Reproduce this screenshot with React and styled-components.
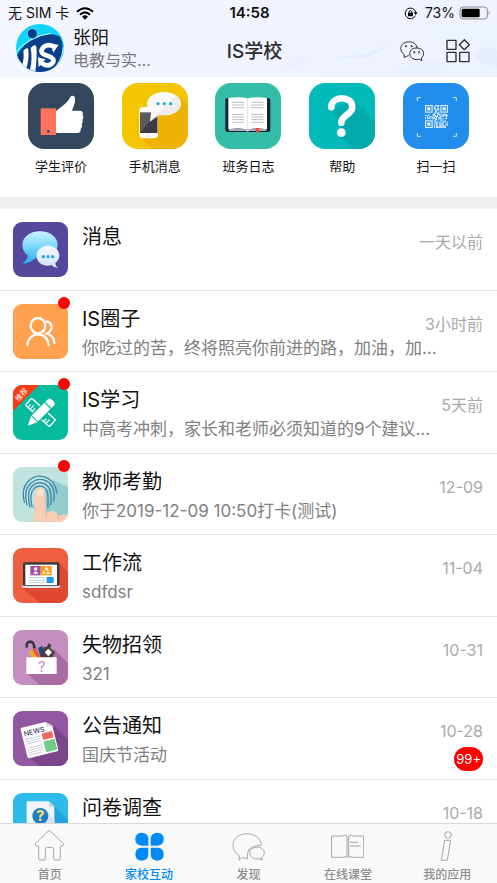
import styled, { createGlobalStyle } from "styled-components"

const GlobalStyle = createGlobalStyle`
* {
  box-sizing: border-box;
}
body {
  margin: 0;
  background-color: #fff;
  font-family: Inter, "Noto Sans CJK SC", sans-serif;
  color: #111;
}
button {
  border: none;
  padding: 0;
  background: none;
  font: inherit;
  color: inherit;
  cursor: pointer;
}
a {
  color: inherit;
  text-decoration: none;
}
svg {
  display: block;
}
`;

const Container = styled.div`
height: 100vh;
display: flex;
flex-direction: column;
overflow: hidden;
`;

const Header = styled.header`
position: relative;
flex: none;
background: linear-gradient(100deg, #f3f5ff, #eff4ff 45%, #edf3ff);
`;

const HeaderArt = styled.svg`
position: absolute;
right: 0;
top: 0;
height: 100%;
`;

const StatusBar = styled.div`
position: relative;
display: grid;
grid-template-columns: 1fr auto 1fr;
align-items: center;
height: 24px;
padding: 2px 6px 0 8px;
font-size: 14px;
line-height: 22px;
`;

const StatusSide = styled.div`
display: flex;
align-items: center;
gap: ${(props) => props.$gap}px;
justify-content: ${(props) => (props.$end ? "flex-end" : "flex-start")};
`;

const Clock = styled.span`
font-size: 15px;
font-weight: 600;
`;

const TitleBar = styled.div`
position: relative;
display: grid;
grid-template-columns: 1fr auto 1fr;
align-items: center;
height: 53px;
padding: 0 0 5px 12px;
`;

const User = styled.div`
display: flex;
align-items: center;
gap: 9px;
padding-left: 4px;
`;

const UserName = styled.div`
font-size: 18px;
line-height: 24px;
`;

const UserDept = styled.div`
font-size: 16px;
line-height: 20px;
color: #777;
white-space: nowrap;
`;

const PageTitle = styled.h1`
margin: 0;
padding-top: 7px;
font-size: 19px;
font-weight: 500;
line-height: 28px;
color: #2b2b2f;
`;

const Actions = styled.div`
display: flex;
justify-content: flex-end;
gap: 22px;
padding: 5px 27px 0 0;
`;

const Shortcuts = styled.nav`
flex: none;
display: grid;
grid-template-columns: repeat(5, 1fr);
padding: 6px 14px 21px;
`;

const Shortcut = styled.button`
display: flex;
flex-direction: column;
align-items: center;
gap: 7px;
font-size: 13px;
line-height: 20px;
`;

const ShortcutIcon = styled.svg`
width: 66px;
height: 66px;
border-radius: 16px;
background-color: ${(props) => props.$bg};
`;

const Divider = styled.div`
flex: none;
height: 12px;
background-color: #f0f0f0;
`;

const List = styled.main`
flex: 1;
min-height: 0;
overflow: hidden;
`;

const Row = styled.a`
display: flex;
gap: 14px;
height: 81px;
padding: 13px 14px 0 13px;
border-bottom: 1px solid #e2e2e2;
&:nth-child(odd) {
  height: 82px;
}
`;

const IconBox = styled.div`
position: relative;
flex: none;
width: 55px;
height: 55px;
`;

const RowIcon = styled.svg`
width: 55px;
height: 55px;
border-radius: 9px;
background-color: ${(props) => props.$bg};
`;

const Dot = styled.span`
position: absolute;
top: -7px;
right: -2px;
width: 12px;
height: 12px;
border-radius: 50%;
background-color: #fe0000;
`;

const RowText = styled.div`
flex: 1;
min-width: 0;
white-space: nowrap;
`;

const RowTitle = styled.div`
font-size: 20px;
line-height: 30px;
`;

const RowDesc = styled.div`
font-size: 17px;
line-height: 28px;
color: #808080;
`;

const RowSide = styled.div`
display: flex;
flex-direction: column;
align-items: flex-end;
gap: 6px;
width: 0;
padding-top: 10px;
white-space: nowrap;
`;

const Time = styled.span`
font-size: 16px;
line-height: 20px;
color: #a9a9a9;
`;

const Count = styled.span`
padding: 0 2px;
border-radius: 12px;
background-color: #fe0000;
font-size: 13px;
line-height: 24px;
color: #fff;
`;

const TabBar = styled.nav`
flex: none;
display: grid;
grid-template-columns: repeat(5, 1fr);
height: 60px;
padding-top: 4px;
border-top: 1px solid #d9d9d9;
background-color: #f9f9f9;
`;

const Tab = styled.a`
display: flex;
flex-direction: column;
align-items: center;
gap: 6px;
font-size: 12px;
font-weight: 500;
line-height: 16px;
color: ${(props) => (props.$active ? "#0089f7" : "#8e8e8e")};
`;

const TabIcon = styled.svg`
width: 33px;
height: 33px;
fill: none;
stroke: #a6a6a6;
stroke-width: 3;
stroke-linejoin: round;
stroke-linecap: round;
`;

const Wifi = () => (
  <svg width="18" height="13" viewBox="0 0 54 39" fill="none" stroke="#000" strokeWidth="6">
    <path d="M3 14 Q27 -7 51 14" />
    <path d="M12 23 Q27 9 42 23" />
    <path d="M18 29 Q27 21 36 29 L27 38 Z" fill="#000" stroke="none" />
  </svg>
)

const RotationLock = () => (
  <svg width="14" height="13" viewBox="0 0 42 39" fill="none" stroke="#000" strokeWidth="3">
    <path d="M34 26 A16 16 0 1 1 35 15" />
    <path d="M29 16 H41 L35 24 Z" fill="#000" stroke="none" />
    <rect x="12" y="17" width="15" height="11" rx="1" fill="#000" stroke="none" />
    <path d="M15 18 V14 Q19 8 24 14 V18" />
  </svg>
)

const Battery = () => (
  <svg width="32" height="14" viewBox="0 0 96 42">
    <rect x="3" y="3" width="82" height="36" rx="9" fill="none" stroke="#8b8b91" strokeWidth="3" />
    <rect x="8" y="8" width="54" height="26" rx="4" fill="#000" />
    <path d="M89 14 Q95 21 89 28 Z" fill="#8b8b91" />
  </svg>
)

const Avatar = () => (
  <svg width="48" height="48" viewBox="0 0 144 144">
    <defs>
      <clipPath id="avatar">
        <circle cx="72" cy="72" r="72" />
      </clipPath>
    </defs>
    <g clipPath="url(#avatar)">
      <rect width="144" height="144" fill="#10d5f8" />
      <path d="M2 96 Q22 56 62 42 Q100 22 132 38 Q144 60 138 92 Q130 124 105 144 H22 Q6 124 2 96 Z" fill="#0a3f8c" />
      <path d="M0 84 Q38 38 104 28" fill="none" stroke="#d9f6fc" strokeWidth="3" />
      <path d="M142 70 Q138 116 104 142" fill="none" stroke="#d9f6fc" strokeWidth="3" />
      <circle cx="49" cy="29" r="15" fill="#0a3f8c" stroke="#8deafa" strokeWidth="2" />
      <path d="M44 72 Q56 58 61 68 Q64 100 58 142 L42 138 Q50 104 44 72 Z" fill="#fff" />
      <path d="M22 80 Q34 68 37 76 Q40 112 29 138 L16 128 Q26 108 22 80 Z" fill="#fff" />
      <path
        d="M118 70 Q100 58 84 68 Q68 84 86 92 L104 99 Q120 110 106 120 Q92 130 76 116"
        fill="none"
        stroke="#fff"
        strokeWidth="14"
      />
      <path d="M112 86 L128 62 L104 60 Z" fill="#fff" />
      <path d="M66 100 L88 106 L68 130 Z" fill="#fff" />
    </g>
  </svg>
)

const ChatIcon = () => (
  <svg width="24" height="24" viewBox="0 0 72 72" fill="none" stroke="#2f2f33" strokeWidth="3" strokeLinejoin="round">
    <path d="M26 50 Q18 51 13 56 L12 46 Q2 39 2 29 C3 2 50 2 51 27" />
    <path d="M59 60 C45 66 29 57 29 43 C31 21 70 22 71 43 Q71 51 65 56 L65 66 Z" />
    <g fill="#2f2f33" stroke="none">
      <circle cx="18" cy="22" r="3" />
      <circle cx="35" cy="22" r="3" />
      <circle cx="43" cy="40" r="3" />
      <circle cx="57" cy="40" r="3" />
    </g>
  </svg>
)

const GridIcon = () => (
  <svg width="24" height="24" viewBox="0 0 72 72" fill="none" stroke="#2f2f33" strokeWidth="4" strokeLinejoin="round">
    <rect x="3" y="4" width="27" height="27" rx="1" />
    <rect x="3" y="40" width="27" height="28" rx="1" />
    <rect x="41" y="40" width="28" height="28" rx="1" />
    <path d="M55 2 L70 17 L55 32 L40 17 Z" />
  </svg>
)

// 21 x 21 modules with the three finder squares left free
const qrCells = []
let seed = 7
for (let y = 0; y < 21; y++) {
  for (let x = 0; x < 21; x++) {
    seed = (seed * 1103515 + 12345) % 65537
    const finder = (x < 8 && y < 8) || (x > 12 && y < 8) || (x < 8 && y > 12)
    if (!finder && seed % 100 < 56) {
      qrCells.push([x, y])
    }
  }
}

const shortcuts = [
  {
    label: "学生评价",
    bg: "#33485d",
    art: (
      <>
        <rect x="38" y="76" width="46" height="80" fill="#ff725b" />
        <circle cx="61" cy="145" r="4" fill="#33485d" />
        <path
          d="M84 84 L108 65 Q122 54 127 42 Q133 35 140 42 Q144 54 136 72 L132 83 H158 Q167 86 164 97 Q169 104 163 110 Q167 118 161 124 Q165 131 158 137 Q160 149 148 150 H84 Z"
          fill="#fff"
        />
      </>
    ),
  },
  {
    label: "手机消息",
    bg: "#f3c502",
    art: (
      <>
        <path d="M172 40 L198 66 V198 H92 L56 164 Z" fill="#edb205" />
        <rect x="52" y="72" width="56" height="94" rx="12" fill="#fff" />
        <rect x="54" y="88" width="52" height="62" fill="#5a5b5f" />
        <path d="M106 88 V150 H54 Z" fill="#3b3c40" />
        <circle cx="80" cy="158" r="5" fill="none" stroke="#ddd" strokeWidth="2" />
        <path d="M75 79 H88" stroke="#ddd" strokeWidth="2" />
        <ellipse cx="126" cy="62" rx="51" ry="35" fill="#f9f9f9" />
        <path d="M88 84 L84 116 L112 90 Z" fill="#f9f9f9" />
        <path d="M162 37 Q184 56 170 80 Q150 100 112 96 L84 116 Z" fill="#ececec" />
        <g fill="#26b4c4">
          <circle cx="108" cy="62" r="5" />
          <circle cx="127" cy="62" r="5" />
          <circle cx="146" cy="62" r="5" />
        </g>
      </>
    ),
  },
  {
    label: "班务日志",
    bg: "#34bda6",
    art: (
      <>
        <rect x="31" y="45" width="135" height="102" rx="7" fill="#14233c" />
        <path d="M40 45 Q72 40 98 46 Q126 40 156 45 V139 Q126 134 98 140 Q72 134 40 139 Z" fill="#fff" />
        <path d="M42 141 H94 L98 144 L103 141 H154" fill="none" stroke="#d7dade" strokeWidth="4" />
        <path d="M98 47 V139" stroke="#d3d3d3" strokeWidth="2" />
        <path
          d="M51 58 H87 M51 66 H87 M51 74 H87 M51 94 H87 M51 102 H87 M51 110 H87 M51 118 H87 M109 58 H146 M109 66 H146 M109 74 H146 M109 94 H146 M109 102 H146 M109 110 H146 M109 118 H146"
          stroke="#bcbcbc"
          strokeWidth="3"
        />
        <path d="M122 135 H133 V150 L128 147 L122 150 Z" fill="#e8472f" />
      </>
    ),
  },
  {
    label: "帮助",
    bg: "#02baba",
    art: (
      <>
        <path d="M132 52 L198 118 V198 H130 L88 156 L98 130 L68 82 Z" fill="#02abab" />
        <path
          d="M67 73 C67 37 130 37 130 72 C130 96 97 94 97 119"
          fill="none"
          stroke="#fff"
          strokeWidth="20"
          strokeLinecap="round"
        />
        <circle cx="97" cy="149" r="13" fill="#fff" />
      </>
    ),
  },
  {
    label: "扫一扫",
    bg: "#218eee",
    art: (
      <>
        <path
          d="M43 54 V44 H53 M150 44 H160 V54 M160 150 V160 H150 M53 160 H43 V150"
          fill="none"
          stroke="#d5eaff"
          strokeWidth="3"
        />
        <svg x="66" y="66" width="69" height="69" viewBox="0 0 21 21">
          {qrCells.map(([x, y]) => (
            <rect key={`${x}-${y}`} x={x} y={y} width="1" height="1" fill="#e6f3ff" />
          ))}
          {[[0, 0], [14, 0], [0, 14]].map(([x, y]) => (
            <g key={`${x}-${y}`}>
              <rect x={x + 0.5} y={y + 0.5} width="6" height="6" fill="none" stroke="#e6f3ff" />
              <rect x={x + 2} y={y + 2} width="3" height="3" fill="#e6f3ff" />
            </g>
          ))}
        </svg>
      </>
    ),
  },
]

const rows = [
  {
    title: "消息",
    time: "一天以前",
    bg: "#55479b",
    art: (
      <>
        <defs>
          <linearGradient id="bubble" x1="0" y1="0" x2="0" y2="1">
            <stop offset="0" stopColor="#c9f4ff" />
            <stop offset="0.45" stopColor="#7fd9fb" />
            <stop offset="1" stopColor="#27a9f2" />
          </linearGradient>
          <linearGradient id="bubbleSmall" x1="0" y1="0" x2="0" y2="1">
            <stop offset="0" stopColor="#f4fbff" />
            <stop offset="1" stopColor="#cfe2f6" />
          </linearGradient>
        </defs>
        <path
          d="M81 28 C112 28 134 46 134 68 C134 92 110 108 80 108 Q70 108 62 112 Q48 126 29 124 Q42 114 45 101 Q28 88 28 68 C28 46 50 28 81 28 Z"
          fill="url(#bubble)"
        />
        <path
          d="M105 71 C125 71 139 84 139 101 Q139 113 127 122 Q127 132 135 137 Q123 138 115 129 Q110 131 103 131 C84 130 71 118 71 101 C71 84 86 71 105 71 Z"
          fill="url(#bubbleSmall)"
        />
        <g fill="#2aa5dc">
          <circle cx="91" cy="104" r="5" />
          <circle cx="105" cy="104" r="5" />
          <circle cx="119" cy="104" r="5" />
        </g>
      </>
    ),
  },
  {
    title: "IS圈子",
    desc: "你吃过的苦，终将照亮你前进的路，加油，加…",
    time: "3小时前",
    dot: true,
    bg: "#ffa14f",
    art: (
      <g fill="none" stroke="#fff" strokeWidth="7">
        <ellipse cx="75" cy="65" rx="22" ry="23" />
        <path d="M43 127 C43 79 107 79 107 127" />
        <path d="M98 52 Q115 53 116 69 Q115 82 102 89 Q122 94 125 119" />
      </g>
    ),
  },
  {
    title: "IS学习",
    desc: "中高考冲刺，家长和老师必须知道的9个建议…",
    time: "5天前",
    dot: true,
    bg: "#07bb9d",
    art: (
      <>
        <path d="M0 0 H78 L0 78 Z" fill="#fb3a12" />
        <text x="25" y="36" fontSize="22" fill="#fff" textAnchor="middle" transform="rotate(-45 26 28)">
          推荐
        </text>
        <g transform="rotate(42 82 82)">
          <rect x="34" y="68" width="97" height="28" rx="4" fill="none" stroke="#fff" strokeWidth="4" />
          <path d="M44 94 V84 M53 94 V80 M62 94 V84 M108 94 V84 M117 94 V80" stroke="#fff" strokeWidth="4" />
        </g>
        <g transform="rotate(-45 82 84)">
          <rect x="46" y="67" width="92" height="34" fill="#07bb9d" />
          <path d="M28 84 L56 71 V97 Z M59 71 H112 V97 H59 Z M116 71 H128 Q135 72 135 84 Q135 96 128 97 H116 Z" fill="#fff" />
        </g>
      </>
    ),
  },
  {
    title: "教师考勤",
    desc: "你于2019-12-09 10:50打卡(测试)",
    time: "12-09",
    dot: true,
    bg: "#c0e4dd",
    art: (
      <>
        <path d="M122 40 L165 60 V165 H90 L58 120 Z" fill="#92cdcc" />
        <g fill="none" stroke="#3f88b2" strokeWidth="4" strokeLinecap="round">
          <path d="M34 106 Q24 66 44 45 Q64 22 92 29 Q126 38 132 78" />
          <path d="M42 114 Q31 72 49 54 Q66 34 90 38 Q118 46 123 74 Q124 88 122 102" />
          <path d="M51 120 Q40 76 55 60 Q68 44 88 48 Q112 54 114 84 Q115 104 112 114" />
          <path d="M57 118 Q49 80 61 67 Q72 54 88 58 Q104 64 105 90 V122" />
        </g>
        <path d="M62 165 L67 82 Q68 62 82 62 Q95 63 96 80 L99 140 Q112 127 130 136 L136 148 Q152 138 165 146 V165 Z" fill="#f9cdb3" />
        <path d="M71 84 Q70 66 82 66 Q93 67 92 84 Q82 92 71 84 Z" fill="#fde0cf" />
        <path d="M99 140 V154 M136 148 L135 158" stroke="#f0b394" strokeWidth="3" />
      </>
    ),
  },
  {
    title: "工作流",
    desc: "sdfdsr",
    time: "11-04",
    bg: "#ef5e3f",
    art: (
      <>
        <path d="M138 44 L165 72 V165 H80 L28 120 Z" fill="#df4830" />
        <rect x="30" y="43" width="109" height="72" rx="6" fill="#38383c" />
        <rect x="37" y="50" width="95" height="61" fill="#fff" />
        <path d="M25 113 H143 Q142 120 134 120 H34 Q26 120 25 113 Z" fill="#e3e3e3" />
        <rect x="52" y="54" width="31" height="28" fill="#a550a5" />
        <rect x="84" y="54" width="32" height="28" fill="#f99c10" />
        <circle cx="68" cy="63" r="5" fill="#fff" />
        <path d="M60 77 Q68 64 76 77 Z" fill="#fff" />
        <path d="M100 59 L109 75 H91 Z" fill="none" stroke="#fff" strokeWidth="4" strokeDasharray="12 4" />
        <path d="M47 89 H94 M47 97 H94 M47 104 H94" stroke="#b5cfd3" strokeWidth="3" />
        <rect x="101" y="87" width="21" height="18" fill="#2196f3" />
      </>
    ),
  },
  {
    title: "失物招领",
    desc: "321",
    time: "10-31",
    bg: "#c48fc0",
    art: (
      <>
        <path d="M124 58 L165 100 V165 H80 L42 130 Z" fill="#aa6ba4" />
        <path d="M42 53 Q38 36 52 35 Q62 35 64 52 L68 62" fill="none" stroke="#38383c" strokeWidth="8" />
        <path d="M47 66 L66 55 L84 84 H58 Z" fill="#f4a829" />
        <path d="M58 60 L68 54 L86 84 H74 Z" fill="#e65a43" />
        <path d="M75 54 L88 47 L98 80 L84 84 Z" fill="#174f86" />
        <path d="M92 52 L102 50 L106 39 L115 45 L112 54 L126 66 L116 84 H84 Z" fill="#45403f" />
        <path d="M106 56 L117 67 L106 79 L95 67 Z" fill="#fff" />
        <rect x="40" y="82" width="91" height="50" rx="2" fill="#fff" />
        <text x="86" y="125" fontSize="44" fill="#c48fc0" textAnchor="middle">?</text>
      </>
    ),
  },
  {
    title: "公告通知",
    desc: "国庆节活动",
    time: "10-28",
    count: "99+",
    bg: "#9357a2",
    art: (
      <>
        <path d="M124 46 L165 86 V165 H80 L46 138 Z" fill="#7c468c" />
        <g transform="rotate(-14 82 86)">
          <path d="M36 38 H110 L127 54 V128 Q127 132 123 132 H36 Q32 132 32 128 V42 Q32 38 36 38 Z" fill="#fff" />
          <path d="M110 38 L127 54 H110 Z" fill="#dcd7e0" />
          <text x="38" y="65" fontSize="21" fontWeight="500" fill="#3f3a66">NEWS</text>
          <path
            d="M38 75 H84 M38 82 H84 M38 89 H84 M38 102 H84 M38 109 H84 M38 116 H84 M38 123 H76"
            stroke="#b9b9be"
            strokeWidth="2"
          />
          <rect x="90" y="69" width="32" height="20" fill="#ef6b5f" />
          <rect x="90" y="94" width="34" height="33" fill="#6fcb83" />
        </g>
      </>
    ),
  },
  {
    title: "问卷调查",
    time: "10-18",
    bg: "#2fbbea",
    art: (
      <>
        <path d="M124 40 L165 80 V165 H40 Z" fill="#22a5df" />
        <path d="M44 25 H108 L124 41 V150 H41 V28 Q41 25 44 25 Z" fill="#f1f5f8" />
        <path d="M98 52 L124 80 V150 H62 Z" fill="#d9e4f0" />
        <path d="M108 25 L124 41 H108 Z" fill="#c5d6e4" />
        <circle cx="82" cy="69" r="24" fill="#1d80c2" />
        <text x="82" y="84" fontSize="42" fontWeight="800" fill="#fddc6a" textAnchor="middle">?</text>
      </>
    ),
  },
]

const tabs = [
  {
    label: "首页",
    art: (
      <path d="M46 9 Q49 6 52 9 L92 48 Q94 53 88 54 H82 V92 Q82 96 78 96 H66 Q62 96 62 92 V64 Q61 58 55 58 H43 Q37 58 37 64 V92 Q37 96 33 96 H21 Q17 96 17 92 V54 H10 Q4 53 7 48 Z" />
    ),
  },
  {
    label: "家校互动",
    active: true,
    art: (
      <g fill="#0089f7" stroke="none">
        <path d="M26 14 Q46 15 46 34 V53 H26 Q7 52 7 34 Q7 15 26 14 Z" />
        <path d="M73 14 Q53 15 53 34 V53 H73 Q92 52 92 34 Q92 15 73 14 Z" />
        <path d="M26 98 Q46 97 46 78 V59 H26 Q7 60 7 78 Q7 97 26 98 Z" />
        <path d="M73 98 Q53 97 53 78 V59 H73 Q92 60 92 78 Q92 97 73 98 Z" />
      </g>
    ),
  },
  {
    label: "发现",
    art: (
      <>
        <path d="M46 91 Q34 91 30 88 L21 97 L22 83 Q3 72 3 52 C4 6 84 6 88 51 Q64 52 51 64 Q44 74 46 91 Z" />
        <path d="M88 90 L91 96 L80 92 C66 96 53 86 53 74 C55 52 96 52 97 74 Q97 84 88 90 Z" />
      </>
    ),
  },
  {
    label: "在线课堂",
    art: (
      <>
        <path d="M3 24 H34 Q42 18 48 24 V88 Q42 84 34 88 H3 Z" />
        <path d="M97 24 H67 Q59 18 53 24 V88 Q59 84 67 88 H97 Z" />
        <path d="M58 43 H80 M58 54 H88" />
      </>
    ),
  },
  {
    label: "我的应用",
    art: (
      <>
        <circle cx="51" cy="21" r="10" />
        <path d="M42 37 H59 L49 97 H32 Z" />
      </>
    ),
  },
]

const App = () => {
  return (
    <Container>
      <GlobalStyle />
      <Header>
        <HeaderArt viewBox="0 0 250 77" aria-hidden="true">
          <path d="M88 57 Q120 56 142 44 Q126 60 108 57 Q98 60 88 57 Z" fill="#e6edfb" />
          <path d="M30 74 L56 54 L68 62 L50 66 Z M148 70 L190 58 L196 77 H146 Z" fill="#eaf0fd" />
          <path d="M226 56 Q240 42 250 50 V68 Q238 66 226 56 Z" fill="#e6edfc" />
        </HeaderArt>
        <StatusBar>
          <StatusSide $gap={7}>
            无 SIM 卡
            <Wifi />
          </StatusSide>
          <Clock>14:58</Clock>
          <StatusSide $gap={7} $end>
            <RotationLock />
            <StatusSide $gap={4}>
              <span>73%</span>
              <Battery />
            </StatusSide>
          </StatusSide>
        </StatusBar>
        <TitleBar>
          <User>
            <Avatar />
            <div>
              <UserName>张阳</UserName>
              <UserDept>电教与实…</UserDept>
            </div>
          </User>
          <PageTitle>IS学校</PageTitle>
          <Actions>
            <button aria-label="聊天"><ChatIcon /></button>
            <button aria-label="应用"><GridIcon /></button>
          </Actions>
        </TitleBar>
      </Header>
      <Shortcuts>
        {shortcuts.map((item) => (
          <Shortcut key={item.label}>
            <ShortcutIcon viewBox="0 0 198 198" $bg={item.bg}>{item.art}</ShortcutIcon>
            {item.label}
          </Shortcut>
        ))}
      </Shortcuts>
      <Divider />
      <List>
        {rows.map((row) => (
          <Row key={row.title} href="#">
            <IconBox>
              <RowIcon viewBox="0 0 165 165" $bg={row.bg}>{row.art}</RowIcon>
              {row.dot && <Dot />}
            </IconBox>
            <RowText>
              <RowTitle>{row.title}</RowTitle>
              {row.desc && <RowDesc>{row.desc}</RowDesc>}
            </RowText>
            <RowSide>
              <Time>{row.time}</Time>
              {row.count && <Count>{row.count}</Count>}
            </RowSide>
          </Row>
        ))}
      </List>
      <TabBar>
        {tabs.map((tab) => (
          <Tab key={tab.label} href="#" $active={tab.active}>
            <TabIcon viewBox="0 0 99 99">{tab.art}</TabIcon>
            {tab.label}
          </Tab>
        ))}
      </TabBar>
    </Container>
  )
}

export default App
